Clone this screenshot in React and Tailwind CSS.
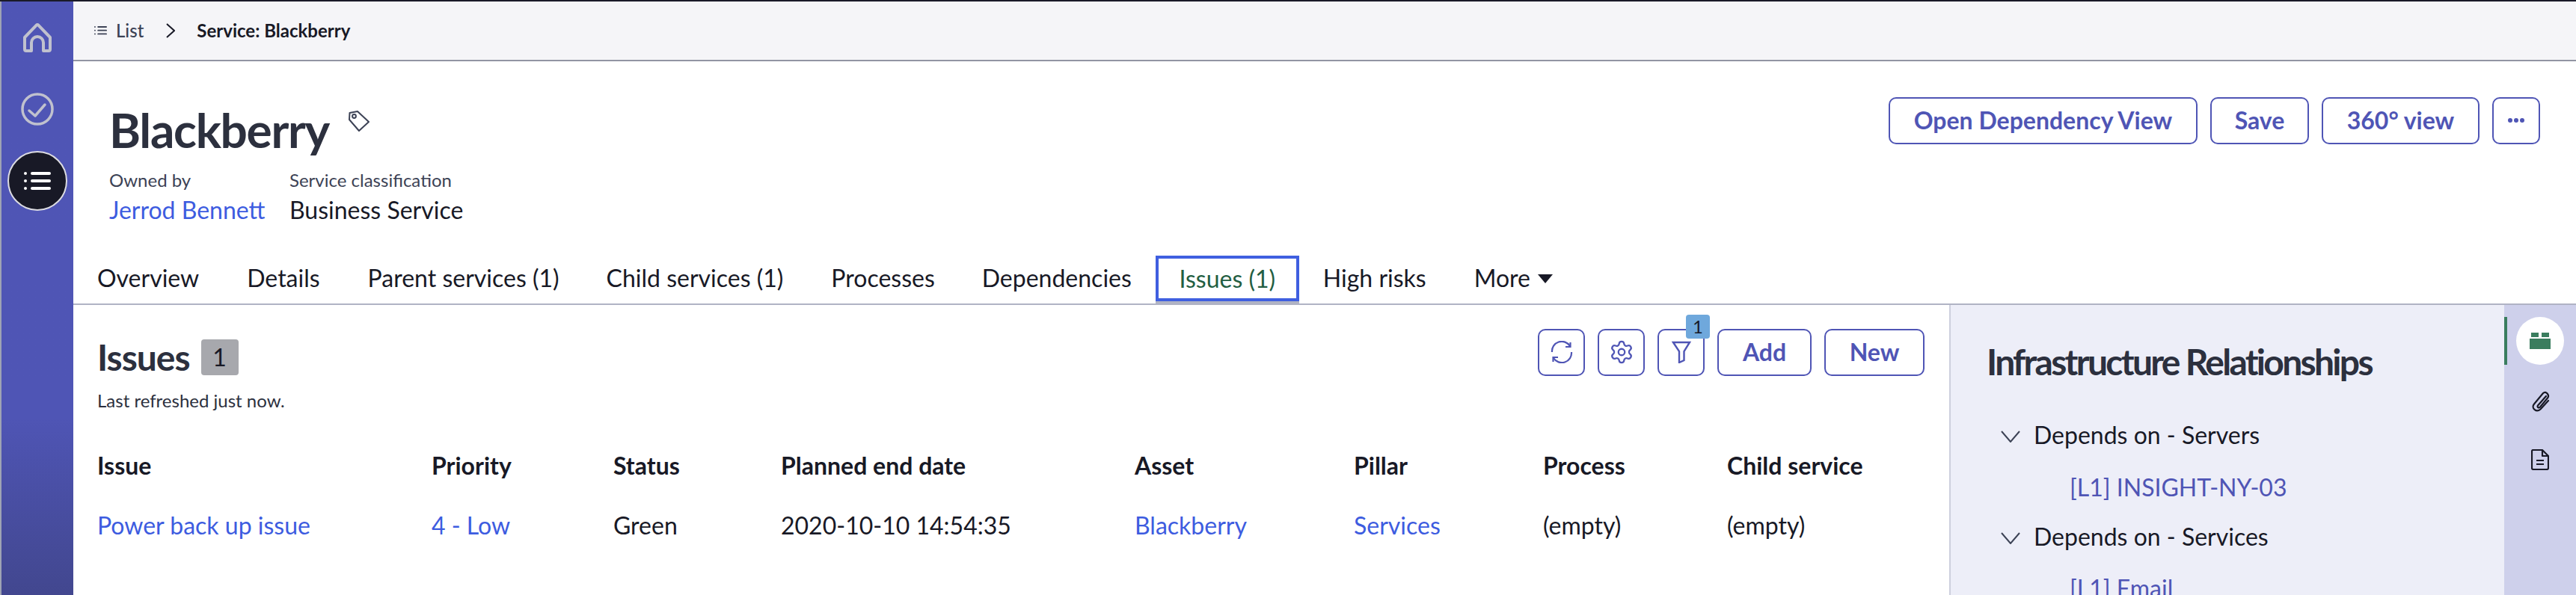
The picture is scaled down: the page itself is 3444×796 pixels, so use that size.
import { Settings } from "lucide-react";

const FONT = "font-['Lato','Liberation_Sans',sans-serif]";

const tabs = [
  { label: "Overview", className: "ml-[32px]" },
  { label: "Details", className: "ml-[64px]" },
  { label: "Parent services (1)", className: "ml-[64px]" },
  { label: "Child services (1)", className: "ml-[63px]" },
  { label: "Processes", className: "ml-[64px]" },
  { label: "Dependencies", className: "ml-[63px]" },
];

const columns = ["Issue", "Priority", "Status", "Planned end date", "Asset", "Pillar", "Process", "Child service"];

function ListGlyph({ className, size = 34 }) {
  return (
    <svg viewBox="0 0 36 24" width={size} height={(size * 24) / 36} className={className} fill="currentColor">
      <circle cx="2" cy="2" r="2" />
      <circle cx="2" cy="12" r="2" />
      <circle cx="2" cy="22" r="2" />
      <rect x="9" y="0" width="27" height="4" rx="2" />
      <rect x="9" y="10" width="27" height="4" rx="2" />
      <rect x="9" y="20" width="27" height="4" rx="2" />
    </svg>
  );
}

function Sidebar() {
  return (
    <aside className="flex w-[98px] shrink-0 flex-col items-center border-l-[2px] border-[#9ea3b4] bg-gradient-to-b from-[#4f55b5] via-[#4f55b5] via-70% to-[#42478f]">
      <svg viewBox="0 0 40 40" className="mt-[28px] h-[40px] w-[40px] text-[#c0c1ce]" fill="none" stroke="currentColor" strokeWidth="4" strokeLinejoin="round">
        <path d="M3 20 L18.5 3.8 Q20 2.5 21.5 3.8 L37 20 V36 Q37 38 35 38 H28 V27 A8 8 0 0 0 12 27 V38 H5 Q3 38 3 36 Z" />
      </svg>
      <svg viewBox="0 0 44 44" className="mt-[54px] h-[44px] w-[44px] text-[#c0c1ce]" fill="none" stroke="currentColor" strokeWidth="3.5" strokeLinecap="round" strokeLinejoin="round">
        <circle cx="22" cy="22" r="20" />
        <path d="M11 24 L19 31 L32 16" />
      </svg>
      <div className="mt-[34px] flex h-[80px] w-[80px] items-center justify-center rounded-full border-[2px] border-[#dcdce2] bg-[#181926] text-white">
        <ListGlyph size={36} />
      </div>
    </aside>
  );
}

function OutlineButton({ children, className = "" }) {
  return (
    <button className={`flex h-[63px] items-center justify-center rounded-[10px] border-[2.5px] border-[#4f55b5] bg-white pb-[2px] text-[32px] font-bold text-[#4f55b5] ${className}`}>
      {children}
    </button>
  );
}

function Header() {
  return (
    <div className="flex h-[242px] shrink-0 items-start justify-between bg-white">
      <div className="pl-[48px] pt-[54px]">
        <div className="flex items-start">
          <h1 className="text-[64px] leading-[76px] font-bold tracking-[-1.3px] text-[#2c303e]">Blackberry</h1>
          <svg viewBox="0 0 28 28" className="ml-[26px] mt-[12px] h-[28px] w-[28px] text-[#3c4255]" fill="none" stroke="currentColor" strokeWidth="2" strokeLinejoin="round">
            <path d="M1.5 3 L12 1 L27 15 L14 27 L1 12 Z" />
            <circle cx="7.5" cy="7.5" r="2.4" />
          </svg>
        </div>
        <div className="mt-[14px] flex">
          <div className="w-[241px]">
            <div className="text-[24px] leading-[30px] text-[#3c4255]">Owned by</div>
            <div className="mt-[4px] text-[32px] leading-[42px] text-[#3d5ce0]">Jerrod Bennett</div>
          </div>
          <div>
            <div className="text-[24px] leading-[30px] text-[#3c4255]">Service classification</div>
            <div className="mt-[4px] text-[32px] leading-[42px] text-[#181926]">Business Service</div>
          </div>
        </div>
      </div>
      <div className="mr-[48px] mt-[48px] flex gap-[17px]">
        <OutlineButton className="w-[413px]">Open Dependency View</OutlineButton>
        <OutlineButton className="w-[132px]">Save</OutlineButton>
        <OutlineButton className="w-[211px]">360° view</OutlineButton>
        <OutlineButton className="w-[64px]">
          <svg viewBox="0 0 24 8" className="h-[8px] w-[24px]" fill="currentColor">
            <circle cx="4" cy="4" r="3" />
            <circle cx="12" cy="4" r="3" />
            <circle cx="20" cy="4" r="3" />
          </svg>
        </OutlineButton>
      </div>
    </div>
  );
}

function TabBar() {
  return (
    <div className="flex h-[84px] shrink-0 items-start border-b-[2px] border-[#b0b3c4] bg-white text-[32px] text-[#181926]">
      {tabs.map((tab) => (
        <div key={tab.label} className={`mt-[18px] leading-[60px] ${tab.className}`}>
          {tab.label}
        </div>
      ))}
      <div className="ml-[32px] flex h-[82px] flex-col">
        <div className="mt-[18px] flex h-[61px] w-[192px] items-center justify-center border-[4px] border-[#3f5fe0] text-[#235e42]">Issues (1)</div>
        <div className="h-[3px] bg-[#b0b3c4]" />
      </div>
      <div className="ml-[32px] mt-[18px] leading-[60px]">High risks</div>
      <div className="ml-[64px] mt-[18px] flex items-center leading-[60px]">
        More
        <svg viewBox="0 0 20 12" className="ml-[10px] mt-[2px] h-[12px] w-[20px]" fill="currentColor">
          <path d="M0 0 H20 L10 12 Z" />
        </svg>
      </div>
    </div>
  );
}

function IconButton({ children, badge }) {
  return (
    <div className="relative">
      <OutlineButton className="w-[63px]">{children}</OutlineButton>
      {badge && (
        <span className="absolute -right-[7px] -top-[19px] flex h-[32px] w-[32px] items-center justify-center rounded-[4px] bg-[#6fa8dc] text-[24px] leading-none font-normal text-[#181926]">
          {badge}
        </span>
      )}
    </div>
  );
}

function IssuesPanel() {
  return (
    <section className="w-[2508px] shrink-0 bg-white px-[32px]">
      <div className="flex items-start justify-between">
        <div className="pt-[46px]">
          <div className="flex items-center">
            <h2 className="text-[48px] leading-[48px] font-bold tracking-[-1px] text-[#2c303e]">Issues</h2>
            <span className="ml-[15px] flex h-[48px] w-[50px] items-center justify-center rounded-[4px] bg-[#a7a8ad] text-[32px] text-[#181926]">1</span>
          </div>
          <p className="mt-[19px] text-[24px] leading-[30px] text-[#2c303e]">Last refreshed just now.</p>
        </div>
        <div className="mr-[1px] mt-[32px] flex gap-[17px]">
          <IconButton>
            <svg viewBox="0 0 30 30" className="h-[30px] w-[30px]" fill="none" stroke="currentColor" strokeWidth="2.2">
              <path d="M26 7 A13 13 0 0 0 2 15" />
              <path d="M4 23 A13 13 0 0 0 28 15" />
              <path d="M20 8 L26.5 8 L26.5 2" strokeLinejoin="miter" />
              <path d="M10 22 L3.5 22 L3.5 28" strokeLinejoin="miter" />
            </svg>
          </IconButton>
          <IconButton>
            <Settings size={34} strokeWidth={1.6} />
          </IconButton>
          <IconButton badge="1">
            <svg viewBox="0 0 26 30" className="h-[30px] w-[26px]" fill="none" stroke="currentColor" strokeWidth="2.4">
              <path d="M2 2 H24 L16.5 14 V26 L10 29 V14 Z" />
            </svg>
          </IconButton>
          <OutlineButton className="w-[126px]">Add</OutlineButton>
          <OutlineButton className="w-[134px]">New</OutlineButton>
        </div>
      </div>
      <div className="mt-[52px] grid grid-cols-[447px_243px_224px_473px_293px_253px_246px_1fr] items-center text-[32px]">
        {columns.map((col) => (
          <div key={col} className="h-[80px] leading-[40px] font-bold text-[#181926]">
            {col}
          </div>
        ))}
        <div className="leading-[40px] text-[#3d5ce0]">Power back up issue</div>
        <div className="leading-[40px] text-[#3d5ce0]">4 - Low</div>
        <div className="leading-[40px] text-[#181926]">Green</div>
        <div className="leading-[40px] text-[#181926]">2020-10-10 14:54:35</div>
        <div className="leading-[40px] text-[#3d5ce0]">Blackberry</div>
        <div className="leading-[40px] text-[#3d5ce0]">Services</div>
        <div className="leading-[40px] text-[#181926]">(empty)</div>
        <div className="leading-[40px] text-[#181926]">(empty)</div>
      </div>
    </section>
  );
}

function Chevron() {
  return (
    <svg viewBox="0 0 26 16" className="mr-[18px] mt-[4px] h-[16px] w-[26px] text-[#3c4255]" fill="none" stroke="currentColor" strokeWidth="2">
      <path d="M1 1 L13 15 L25 1" />
    </svg>
  );
}

function RelationshipsPanel() {
  return (
    <section className="flex min-w-0 flex-1 flex-col border-l-[2px] border-[#cdcfdd] bg-[#edeef8] pl-[48px] pt-[48px]">
      <h2 className="text-[48px] leading-[56px] font-bold tracking-[-2.7px] text-[#2c303e]">Infrastructure Relationships</h2>
      <div className="mt-[50px] pl-[19px] text-[32px] text-[#181926]">
        <div className="flex items-center leading-[40px]">
          <Chevron />
          Depends on - Servers
        </div>
        <div className="ml-[92px] mt-[30px] leading-[40px] text-[#4f55b5]">[L1] INSIGHT-NY-03</div>
        <div className="mt-[26px] flex items-center leading-[40px]">
          <Chevron />
          Depends on - Services
        </div>
        <div className="ml-[92px] mt-[29px] leading-[40px] text-[#4f55b5]">[L1] Email</div>
      </div>
    </section>
  );
}

function Rail() {
  return (
    <aside className="flex w-[96px] shrink-0 flex-col items-center bg-[#ced0eb] pt-[16px]">
      <div className="relative flex h-[64px] w-[64px] items-center justify-center rounded-full bg-white">
        <span className="absolute -left-[16px] top-0 h-[64px] w-[4px] bg-[#3a7d5e]" />
        <svg viewBox="0 0 28 22" className="h-[22px] w-[28px]" fill="#3a7d5e">
          <rect x="2" y="0" width="10" height="6" />
          <rect x="16" y="0" width="10" height="6" />
          <rect x="0" y="8" width="28" height="14" />
        </svg>
      </div>
      <svg viewBox="0 0 26 30" className="mt-[33px] h-[30px] w-[26px] text-[#181926]" fill="none" stroke="currentColor" strokeWidth="2.2" strokeLinecap="round">
        <path d="M21 9 L10 21.5 C8.5 23.5 11 25.5 13 23.5 L23 11.5 C26 8 21 1 17 5 L5 19.5 C0.5 25 8 31.5 13.5 26.5 L24 15" />
      </svg>
      <svg viewBox="0 0 24 28" className="mt-[50px] h-[28px] w-[24px] text-[#181926]" fill="none" stroke="currentColor" strokeWidth="2.2" strokeLinejoin="round">
        <path d="M2.5 1 H15 L23 9 V25 Q23 27 21 27 H3 Q1 27 1 25 V3 Q1 1 2.5 1 Z" />
        <path d="M15 1 V9 H23" />
        <path d="M7 15 H17 M7 20 H17" />
      </svg>
    </aside>
  );
}

export default function App() {
  return (
    <div className={`flex h-[796px] w-[3444px] flex-col overflow-hidden bg-white ${FONT}`}>
      <div className="h-[2px] shrink-0 bg-[#1a1a28]" />
      <div className="flex min-h-0 flex-1">
        <Sidebar />
        <main className="flex min-w-0 flex-1 flex-col">
          <div className="flex h-[80px] shrink-0 items-center border-b-[2px] border-[#9295a3] bg-[#f5f5f8] pl-[28px] text-[24px]">
            <ListGlyph size={17} className="text-[#3c4255]" />
            <span className="ml-[12px] font-medium text-[#3c4255]">List</span>
            <svg viewBox="0 0 12 20" className="ml-[30px] h-[20px] w-[12px] text-[#181926]" fill="none" stroke="currentColor" strokeWidth="2">
              <path d="M1 1 L11 10 L1 19" />
            </svg>
            <span className="ml-[29px] font-bold text-[#181926]">Service: Blackberry</span>
          </div>
          <Header />
          <TabBar />
          <div className="flex min-h-0 flex-1 overflow-hidden">
            <IssuesPanel />
            <RelationshipsPanel />
            <Rail />
          </div>
        </main>
      </div>
    </div>
  );
}
